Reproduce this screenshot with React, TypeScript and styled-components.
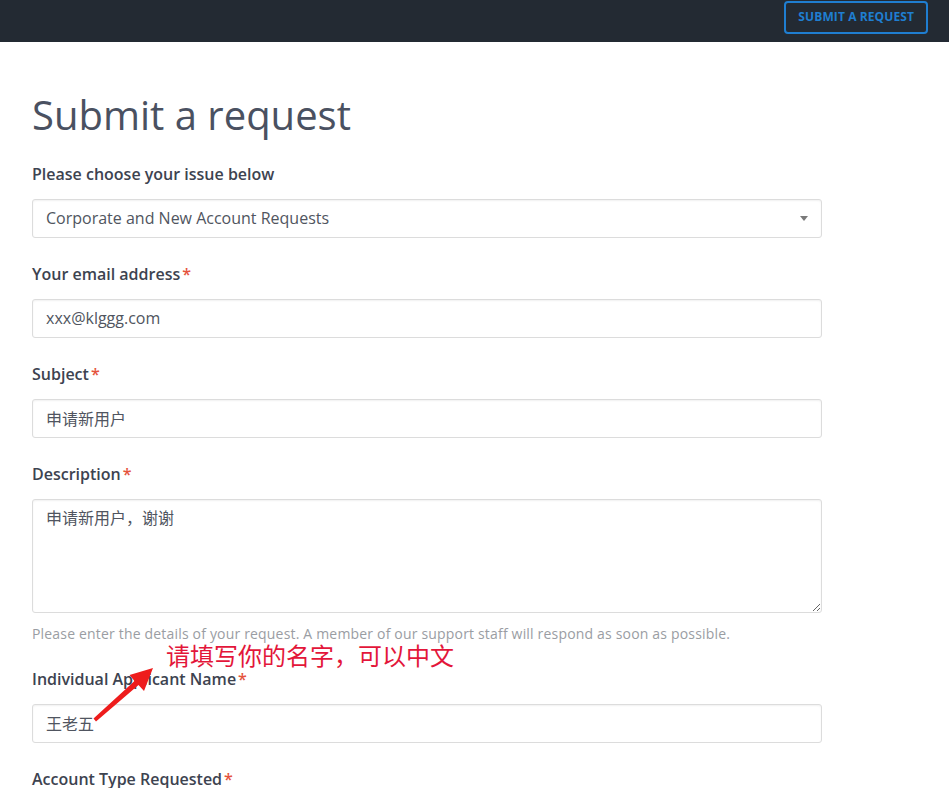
import React from 'react';
import styled, { createGlobalStyle } from 'styled-components';

const GlobalStyle = createGlobalStyle`
  body {
    margin: 0;
    background: #fff;
    font-family: "Open Sans", "Noto Sans CJK SC", sans-serif;
  }
`;

const fields = [
  { label: 'Your email address', value: 'xxx@klggg.com', required: true },
  { label: 'Subject', value: '申请新用户', required: true },
];

export default function App() {
  return (
    <Page>
      <GlobalStyle />
      <Header>
        <HeaderButton>Submit a request</HeaderButton>
      </Header>
      <Main>
        <Title>Submit a request</Title>
        <Form>
          <Field>
            <Label>Please choose your issue below</Label>
            <Select>
              <span>Corporate and New Account Requests</span>
              <Caret />
            </Select>
          </Field>
          {fields.map((f) => (
            <Field key={f.label}>
              <Label>
                {f.label}
                {f.required && <Required>*</Required>}
              </Label>
              <Input readOnly value={f.value} />
            </Field>
          ))}
          <Field>
            <Label>
              Description<Required>*</Required>
            </Label>
            <TextArea readOnly value="申请新用户，谢谢" />
            <Hint>
              Please enter the details of your request. A member of our support staff will respond as soon as possible.
            </Hint>
          </Field>
          <Field>
            <Label>
              Individual Applicant Name<Required>*</Required>
            </Label>
            <Input readOnly value="王老五" />
          </Field>
          <Field>
            <Label>
              Account Type Requested<Required>*</Required>
            </Label>
          </Field>
        </Form>
      </Main>
      <Note>请填写你的名字，可以中文</Note>
      <Arrow viewBox="0 0 70 68">
        <polygon points="65,8 56,31 50.5,25 8,61.5 5.5,58.5 46.5,21 41.5,15" fill="#ee1c1c" />
      </Arrow>
    </Page>
  );
}

const Page = styled.div`
  position: relative;
  min-height: 788px;
  overflow: hidden;
`;

const Header = styled.header`
  height: 42px;
  background: #232a33;
  display: flex;
  justify-content: flex-end;
  align-items: flex-start;
  padding: 1px 21px 0 0;
  box-sizing: border-box;
`;

const HeaderButton = styled.button`
  height: 33px;
  padding: 0 12px 1px;
  border: 2px solid #1f7ed1;
  border-radius: 4px;
  background: transparent;
  color: #1f7ed1;
  font-family: "Open Sans", sans-serif;
  font-size: 12px;
  line-height: 28px;
  font-weight: 700;
  text-transform: uppercase;
  letter-spacing: 0.1px;
`;

const Main = styled.main`
  padding: 49px 0 0 32px;
`;

const Title = styled.h1`
  margin: 0;
  font-size: 40px;
  line-height: 48px;
  font-weight: 400;
  color: #4a5161;
`;

const Form = styled.div`
  width: 790px;
  margin-top: 25px;
  display: flex;
  flex-direction: column;
  gap: 26px;
`;

const Field = styled.div`
  display: flex;
  flex-direction: column;
`;

const Label = styled.label`
  font-size: 16px;
  line-height: 20px;
  font-weight: 600;
  color: #3d4350;
  margin-bottom: 15px;
`;

const Required = styled.span`
  color: #e5533d;
  margin-left: 2px;
`;

const boxStyles = `
  box-sizing: border-box;
  width: 790px;
  border: 1px solid #dcdcdc;
  border-radius: 3px;
  box-shadow: inset 0 1px 2px rgba(0, 0, 0, 0.06);
  background: #fff;
  font-family: "Open Sans", "Noto Sans CJK SC", sans-serif;
  font-size: 16px;
  color: #505560;
  padding: 0 13px;
  outline: none;
`;

const Input = styled.input`
  ${boxStyles}
  height: 39px;
  padding-bottom: 2px;
`;

const Select = styled.div`
  ${boxStyles}
  height: 39px;
  display: flex;
  align-items: center;
  justify-content: space-between;
  padding-right: 13px;
  padding-bottom: 2px;
`;

const Caret = styled.span`
  width: 0;
  height: 0;
  margin-top: 2px;
  border-left: 4px solid transparent;
  border-right: 4px solid transparent;
  border-top: 5px solid #7a7a7a;
`;

const TextArea = styled.textarea`
  ${boxStyles}
  height: 114px;
  padding: 7px 13px;
  line-height: 22px;
  resize: vertical;
  display: block;
`;

const Hint = styled.p`
  margin: 12px 0 0;
  font-size: 14px;
  line-height: 18px;
  letter-spacing: 0.18px;
  color: #9a9da3;
`;

const Note = styled.div`
  position: absolute;
  left: 166px;
  top: 639px;
  font-family: "Noto Sans CJK SC", sans-serif;
  font-size: 24px;
  line-height: 32px;
  color: #e3163a;
  white-space: nowrap;
`;

const Arrow = styled.svg`
  position: absolute;
  left: 88px;
  top: 660px;
  width: 70px;
  height: 68px;
`;
